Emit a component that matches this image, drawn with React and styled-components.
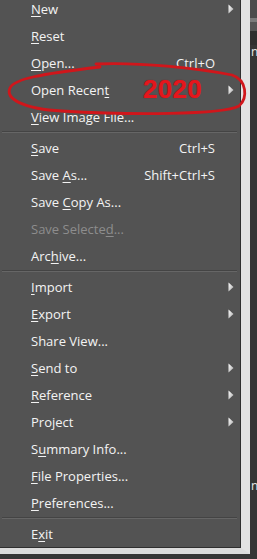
import React from "react";
import styled, { createGlobalStyle } from "styled-components";

const Global = createGlobalStyle`
  html, body {
    margin: 0;
    padding: 0;
    background: #363636;
    overflow: hidden;
  }
  body {
    font-family: "Open Sans", "Noto Sans", "Liberation Sans", sans-serif;
  }
`;

const Page = styled.div`
  position: relative;
  display: flex;
  align-items: flex-start;
  width: 257px;
  height: 559px;
`;

const Frame = styled.div`
  border-right: 9px solid #e2e2e2;
  border-bottom: 6px solid #dcdcdc;
  flex: none;
`;

const Menu = styled.div`
  width: 240px;
  background: #535353;
  border-right: 1px solid #2f2f2f;
  border-bottom: 1px solid #2f2f2f;
`;

const List = styled.div`
  margin-top: -5px;
  display: flex;
  flex-direction: column;
`;

const Row = styled.div`
  display: grid;
  grid-template-columns: 1fr auto 25px;
  align-items: center;
  height: 27px;
  padding-left: 31px;
  font-size: 13px;
  color: ${(p) => (p.$disabled ? "#8d8d8d" : "#f3f3f3")};
  white-space: nowrap;
  u {
    text-decoration-thickness: 1px;
    text-underline-offset: 2px;
  }
`;

const Shortcut = styled.span`
  text-align: right;
`;

const ArrowCell = styled.span`
  display: flex;
  align-items: center;
  padding-left: 13px;
`;

const Separator = styled.div`
  height: 4px;
  display: flex;
  align-items: center;
  padding: 0 3px 0 2px;
  &::before {
    content: "";
    flex: 1;
    border-top: 1px solid #444444;
    border-bottom: 1px solid #666666;
    height: 0;
  }
`;

const Side = styled.div`
  flex: 1;
  align-self: stretch;
  display: flex;
  flex-direction: column;
  background: #353535;
  overflow: hidden;
`;

const Band = styled.div`
  height: ${(p) => p.$h}px;
  background: ${(p) => p.$c};
  flex: none;
`;

const Glyph = styled.div`
  height: ${(p) => p.$h}px;
  font-size: 12px;
  line-height: ${(p) => p.$h}px;
  color: #e8e8e8;
  padding-left: 1px;
  flex: none;
`;

const Scribble = styled.svg`
  position: absolute;
  left: 0;
  top: 0;
  pointer-events: none;
`;

const Stamp = styled.div`
  position: absolute;
  left: 143px;
  top: 76px;
  font-family: "Liberation Sans", Arial, sans-serif;
  font-weight: bold;
  font-size: 26px;
  line-height: 26px;
  letter-spacing: 0.3px;
  color: #e5161d;
  text-shadow: 0 0 1px #8a1010;
`;

const Arrow = () => (
  <svg width="6" height="10" viewBox="0 0 6 10">
    <defs>
      <linearGradient id="ag" x1="0" y1="0" x2="1" y2="1">
        <stop offset="0" stopColor="#ffffff" />
        <stop offset="1" stopColor="#a9a9a9" />
      </linearGradient>
    </defs>
    <path d="M0.5 0.5 L5.5 5 L0.5 9.5 Z" fill="url(#ag)" />
  </svg>
);

const items = [
  { label: "New", u: 0, sub: true },
  { label: "Reset", u: 0 },
  { label: "Open...", u: 0, shortcut: "Ctrl+O" },
  { label: "Open Recent", u: 10, sub: true },
  { label: "View Image File...", u: 0 },
  "sep",
  { label: "Save", u: 0, shortcut: "Ctrl+S" },
  { label: "Save As...", u: 5, shortcut: "Shift+Ctrl+S" },
  { label: "Save Copy As...", u: 5 },
  { label: "Save Selected...", u: 12, disabled: true },
  { label: "Archive...", u: 3 },
  "sep",
  { label: "Import", u: 0, sub: true },
  { label: "Export", u: 0, sub: true },
  { label: "Share View..." },
  { label: "Send to", u: 0, sub: true },
  { label: "Reference", u: 0, sub: true },
  { label: "Project", sub: true },
  { label: "Summary Info...", u: 1 },
  { label: "File Properties...", u: 0 },
  { label: "Preferences...", u: 0 },
  "sep",
  { label: "Exit", u: 1 },
];

const Label = ({ text, u }) => {
  if (u === undefined) return <span>{text}</span>;
  return (
    <span>
      {text.slice(0, u)}
      <u>{text[u]}</u>
      {text.slice(u + 1)}
    </span>
  );
};

export default function App() {
  return (
    <>
      <Global />
      <Page>
        <Frame>
          <Menu>
            <List>
              {items.map((it, i) =>
                it === "sep" ? (
                  <Separator key={i} />
                ) : (
                  <Row key={i} $disabled={it.disabled}>
                    <Label text={it.label} u={it.u} />
                    <Shortcut>{it.shortcut || ""}</Shortcut>
                    <ArrowCell>{it.sub ? <Arrow /> : null}</ArrowCell>
                  </Row>
                )
              )}
            </List>
          </Menu>
        </Frame>
        <Side>
          <Band $h={18} $c="#4c4c4c" />
          <Band $h={4} $c="#7b7b7b" />
          <Band $h={9} $c="#555555" />
          <Band $h={14} $c="#2f2f2f" />
          <Glyph $h={14}>n</Glyph>
          <Band $h={420} $c="#353535" />
          <Glyph $h={14}>n</Glyph>
        </Side>
        <Scribble width="257" height="130" viewBox="0 0 257 130">
          <path
            d="M96 64 C140 62 196 68 232 75 C247 80 248 98 239 106 C222 115 130 115 62 111 C24 109 5 99 10 88 C14 79 40 74 100 67"
            fill="none"
            stroke="#d0161b"
            strokeWidth="2.8"
            strokeLinecap="round"
          />
        </Scribble>
        <Stamp>2020</Stamp>
      </Page>
    </>
  );
}
